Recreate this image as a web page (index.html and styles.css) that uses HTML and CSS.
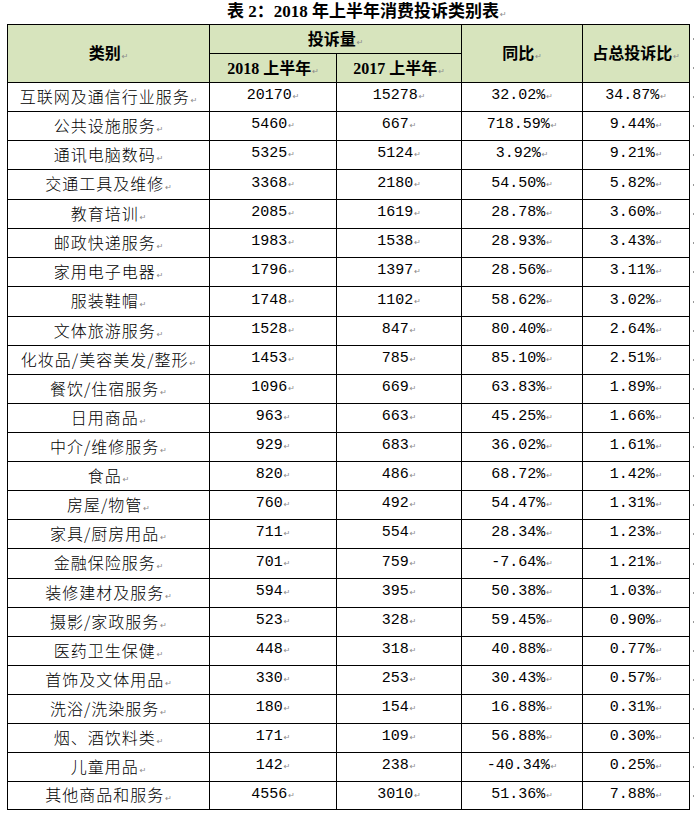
FILE: index.html
```html
<!DOCTYPE html>
<html lang="zh-CN">
<head>
<meta charset="utf-8">
<title>表 2：2018 年上半年消费投诉类别表</title>
<link rel="stylesheet" href="styles.css">
</head>
<body>
<div class="title">表 2：2018 年上半年消费投诉类别表<span class="pm">↵</span></div>
<table class="tbl">
  <colgroup>
    <col class="c1"><col class="c2"><col class="c3"><col class="c4"><col class="c5"><col class="c6">
  </colgroup>
  <thead>
    <tr>
      <th rowspan="2">类别<span class="pm">↵</span></th>
      <th colspan="2">投诉量<span class="pm">↵</span></th>
      <th rowspan="2">同比<span class="pm">↵</span></th>
      <th rowspan="2">占总投诉比<span class="pm">↵</span></th>
      <td class="eor"><span class="mk"></span></td>
    </tr>
    <tr>
      <th>2018 上半年<span class="pm">↵</span></th>
      <th>2017 上半年<span class="pm">↵</span></th>
      <td class="eor"><span class="mk"></span></td>
    </tr>
  </thead>
  <tbody>
    <tr><td class="name">互联网及通信行业服务<span class="pm">↵</span></td><td>20170<span class="pm">↵</span></td><td>15278<span class="pm">↵</span></td><td>32.02%<span class="pm">↵</span></td><td>34.87%<span class="pm">↵</span></td><td class="eor"><span class="mk"></span></td></tr>
    <tr><td class="name">公共设施服务<span class="pm">↵</span></td><td>5460<span class="pm">↵</span></td><td>667<span class="pm">↵</span></td><td>718.59%<span class="pm">↵</span></td><td>9.44%<span class="pm">↵</span></td><td class="eor"><span class="mk"></span></td></tr>
    <tr><td class="name">通讯电脑数码<span class="pm">↵</span></td><td>5325<span class="pm">↵</span></td><td>5124<span class="pm">↵</span></td><td>3.92%<span class="pm">↵</span></td><td>9.21%<span class="pm">↵</span></td><td class="eor"><span class="mk"></span></td></tr>
    <tr class="tall"><td class="name">交通工具及维修<span class="pm">↵</span></td><td>3368<span class="pm">↵</span></td><td>2180<span class="pm">↵</span></td><td>54.50%<span class="pm">↵</span></td><td>5.82%<span class="pm">↵</span></td><td class="eor"><span class="mk"></span></td></tr>
    <tr><td class="name">教育培训<span class="pm">↵</span></td><td>2085<span class="pm">↵</span></td><td>1619<span class="pm">↵</span></td><td>28.78%<span class="pm">↵</span></td><td>3.60%<span class="pm">↵</span></td><td class="eor"><span class="mk"></span></td></tr>
    <tr><td class="name">邮政快递服务<span class="pm">↵</span></td><td>1983<span class="pm">↵</span></td><td>1538<span class="pm">↵</span></td><td>28.93%<span class="pm">↵</span></td><td>3.43%<span class="pm">↵</span></td><td class="eor"><span class="mk"></span></td></tr>
    <tr><td class="name">家用电子电器<span class="pm">↵</span></td><td>1796<span class="pm">↵</span></td><td>1397<span class="pm">↵</span></td><td>28.56%<span class="pm">↵</span></td><td>3.11%<span class="pm">↵</span></td><td class="eor"><span class="mk"></span></td></tr>
    <tr class="tall"><td class="name">服装鞋帽<span class="pm">↵</span></td><td>1748<span class="pm">↵</span></td><td>1102<span class="pm">↵</span></td><td>58.62%<span class="pm">↵</span></td><td>3.02%<span class="pm">↵</span></td><td class="eor"><span class="mk"></span></td></tr>
    <tr><td class="name">文体旅游服务<span class="pm">↵</span></td><td>1528<span class="pm">↵</span></td><td>847<span class="pm">↵</span></td><td>80.40%<span class="pm">↵</span></td><td>2.64%<span class="pm">↵</span></td><td class="eor"><span class="mk"></span></td></tr>
    <tr><td class="name">化妆品/美容美发/整形<span class="pm">↵</span></td><td>1453<span class="pm">↵</span></td><td>785<span class="pm">↵</span></td><td>85.10%<span class="pm">↵</span></td><td>2.51%<span class="pm">↵</span></td><td class="eor"><span class="mk"></span></td></tr>
    <tr><td class="name">餐饮/住宿服务<span class="pm">↵</span></td><td>1096<span class="pm">↵</span></td><td>669<span class="pm">↵</span></td><td>63.83%<span class="pm">↵</span></td><td>1.89%<span class="pm">↵</span></td><td class="eor"><span class="mk"></span></td></tr>
    <tr><td class="name">日用商品<span class="pm">↵</span></td><td>963<span class="pm">↵</span></td><td>663<span class="pm">↵</span></td><td>45.25%<span class="pm">↵</span></td><td>1.66%<span class="pm">↵</span></td><td class="eor"><span class="mk"></span></td></tr>
    <tr><td class="name">中介/维修服务<span class="pm">↵</span></td><td>929<span class="pm">↵</span></td><td>683<span class="pm">↵</span></td><td>36.02%<span class="pm">↵</span></td><td>1.61%<span class="pm">↵</span></td><td class="eor"><span class="mk"></span></td></tr>
    <tr><td class="name">食品<span class="pm">↵</span></td><td>820<span class="pm">↵</span></td><td>486<span class="pm">↵</span></td><td>68.72%<span class="pm">↵</span></td><td>1.42%<span class="pm">↵</span></td><td class="eor"><span class="mk"></span></td></tr>
    <tr><td class="name">房屋/物管<span class="pm">↵</span></td><td>760<span class="pm">↵</span></td><td>492<span class="pm">↵</span></td><td>54.47%<span class="pm">↵</span></td><td>1.31%<span class="pm">↵</span></td><td class="eor"><span class="mk"></span></td></tr>
    <tr><td class="name">家具/厨房用品<span class="pm">↵</span></td><td>711<span class="pm">↵</span></td><td>554<span class="pm">↵</span></td><td>28.34%<span class="pm">↵</span></td><td>1.23%<span class="pm">↵</span></td><td class="eor"><span class="mk"></span></td></tr>
    <tr class="tall"><td class="name">金融保险服务<span class="pm">↵</span></td><td>701<span class="pm">↵</span></td><td>759<span class="pm">↵</span></td><td>-7.64%<span class="pm">↵</span></td><td>1.21%<span class="pm">↵</span></td><td class="eor"><span class="mk"></span></td></tr>
    <tr><td class="name">装修建材及服务<span class="pm">↵</span></td><td>594<span class="pm">↵</span></td><td>395<span class="pm">↵</span></td><td>50.38%<span class="pm">↵</span></td><td>1.03%<span class="pm">↵</span></td><td class="eor"><span class="mk"></span></td></tr>
    <tr><td class="name">摄影/家政服务<span class="pm">↵</span></td><td>523<span class="pm">↵</span></td><td>328<span class="pm">↵</span></td><td>59.45%<span class="pm">↵</span></td><td>0.90%<span class="pm">↵</span></td><td class="eor"><span class="mk"></span></td></tr>
    <tr><td class="name">医药卫生保健<span class="pm">↵</span></td><td>448<span class="pm">↵</span></td><td>318<span class="pm">↵</span></td><td>40.88%<span class="pm">↵</span></td><td>0.77%<span class="pm">↵</span></td><td class="eor"><span class="mk"></span></td></tr>
    <tr><td class="name">首饰及文体用品<span class="pm">↵</span></td><td>330<span class="pm">↵</span></td><td>253<span class="pm">↵</span></td><td>30.43%<span class="pm">↵</span></td><td>0.57%<span class="pm">↵</span></td><td class="eor"><span class="mk"></span></td></tr>
    <tr><td class="name">洗浴/洗染服务<span class="pm">↵</span></td><td>180<span class="pm">↵</span></td><td>154<span class="pm">↵</span></td><td>16.88%<span class="pm">↵</span></td><td>0.31%<span class="pm">↵</span></td><td class="eor"><span class="mk"></span></td></tr>
    <tr><td class="name">烟、酒饮料类<span class="pm">↵</span></td><td>171<span class="pm">↵</span></td><td>109<span class="pm">↵</span></td><td>56.88%<span class="pm">↵</span></td><td>0.30%<span class="pm">↵</span></td><td class="eor"><span class="mk"></span></td></tr>
    <tr><td class="name">儿童用品<span class="pm">↵</span></td><td>142<span class="pm">↵</span></td><td>238<span class="pm">↵</span></td><td>-40.34%<span class="pm">↵</span></td><td>0.25%<span class="pm">↵</span></td><td class="eor"><span class="mk"></span></td></tr>
    <tr class="short"><td class="name">其他商品和服务<span class="pm">↵</span></td><td>4556<span class="pm">↵</span></td><td>3010<span class="pm">↵</span></td><td>51.36%<span class="pm">↵</span></td><td>7.88%<span class="pm">↵</span></td><td class="eor"><span class="mk"></span></td></tr>
  </tbody>
</table>
</body>
</html>
```
FILE: styles.css
```css
html, body {
  margin: 0;
  padding: 0;
  background: #ffffff;
}
body {
  font-family: "Liberation Serif", "Noto Sans CJK SC", serif;
  color: #000;
}
.title {
  height: 24px;
  padding-left: 227px;
  font-size: 17px;
  font-weight: bold;
  line-height: 24px;
  white-space: nowrap;
}
.pm {
  font-family: "DejaVu Sans", sans-serif;
  font-size: 8px;
  font-weight: normal;
  color: #8a8a8a;
  letter-spacing: 0;
  margin-left: 1px;
  vertical-align: baseline;
}
.tbl {
  margin-left: 7px;
  border-collapse: collapse;
  table-layout: fixed;
  width: 688px;
}
.c1 { width: 202px; }
.c2 { width: 127px; }
.c3 { width: 125px; }
.c4 { width: 121px; }
.c5 { width: 107px; }
.c6 { width: 6px; }
.tbl tr {
  height: 29px;
}
.tbl tr.tall {
  height: 30px;
}
.tbl tr.short {
  height: 28px;
}
.tbl th, .tbl td {
  border: 1px solid #000;
  padding: 0 0 3px 0;
  text-align: center;
  white-space: nowrap;
  overflow: hidden;
}
.tbl th {
  background: #d7e4bd;
  font-family: "Liberation Serif", "Noto Sans CJK SC", serif;
  font-weight: bold;
  font-size: 16px;
}
.tbl td {
  font-family: "Liberation Mono", "Noto Sans CJK SC", monospace;
  font-size: 15px;
  font-weight: 300;
}
.tbl td.name {
  font-family: "Noto Sans CJK SC", sans-serif;
  font-size: 16px;
  letter-spacing: 1px;
  font-weight: 300;
}
.tbl td.eor {
  border: none;
  text-align: left;
  padding: 0;
}
.mk {
  display: block;
  width: 2px;
  height: 2px;
  margin-left: 3px;
  background: #9a9a9a;
}
```
